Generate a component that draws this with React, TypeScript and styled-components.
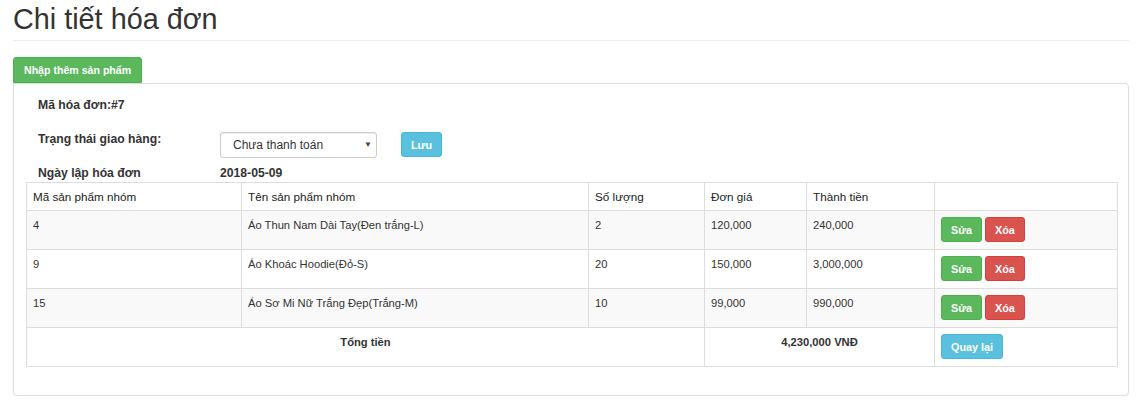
import styled, { createGlobalStyle } from 'styled-components';

interface Item {
	code: string;
	name: string;
	qty: number;
	price: string;
	total: string;
}

const items: Item[] = [
	{ code: '4', name: 'Áo Thun Nam Dài Tay(Đen trắng-L)', qty: 2, price: '120,000', total: '240,000' },
	{ code: '9', name: 'Áo Khoác Hoodie(Đỏ-S)', qty: 20, price: '150,000', total: '3,000,000' },
	{ code: '15', name: 'Áo Sơ Mi Nữ Trắng Đẹp(Trắng-M)', qty: 10, price: '99,000', total: '990,000' },
];

const colWidths = [215, 347, 116, 102, 128, 183];

export default function App() {
	return (
		<>
			<GlobalStyle />
			<Page>
				<Title>Chi tiết hóa đơn</Title>
				<Divider />
				<Button variant="success" tab>
					Nhập thêm sản phẩm
				</Button>
				<Panel>
					<InfoLine>Mã hóa đơn:#7</InfoLine>
					<StatusRow>
						<Label>Trạng thái giao hàng:</Label>
						<SelectWrap>
							<Select defaultValue="unpaid">
								<option value="unpaid">Chưa thanh toán</option>
								<option value="paid">Đã thanh toán</option>
							</Select>
							<Caret>▼</Caret>
						</SelectWrap>
						<Button variant="info">Lưu</Button>
					</StatusRow>
					<DateRow>
						<Label>Ngày lập hóa đơn</Label>
						<span>2018-05-09</span>
					</DateRow>
					<Table>
						<colgroup>
							{colWidths.map((w, i) => (
								<col key={i} style={{ width: w }} />
							))}
						</colgroup>
						<thead>
							<tr>
								<Th>Mã sản phẩm nhóm</Th>
								<Th>Tên sản phẩm nhóm</Th>
								<Th>Số lượng</Th>
								<Th>Đơn giá</Th>
								<Th>Thành tiền</Th>
								<Th />
							</tr>
						</thead>
						<tbody>
							{items.map((item, i) => (
								<Row key={item.code} striped={i % 2 === 0}>
									<Td>{item.code}</Td>
									<Td>{item.name}</Td>
									<Td>{item.qty}</Td>
									<Td>{item.price}</Td>
									<Td>{item.total}</Td>
									<Td>
										<Actions>
											<Button variant="success">Sửa</Button>
											<Button variant="danger">Xóa</Button>
										</Actions>
									</Td>
								</Row>
							))}
							<Row>
								<Td colSpan={3} center bold>
									Tổng tiền
								</Td>
								<Td colSpan={2} center bold>
									4,230,000 VNĐ
								</Td>
								<Td>
									<Button variant="info">Quay lại</Button>
								</Td>
							</Row>
						</tbody>
					</Table>
				</Panel>
			</Page>
		</>
	);
}

const GlobalStyle = createGlobalStyle`
	body {
		margin: 0;
		background: #fff;
		color: #333;
		font-family: "Liberation Sans", Arial, sans-serif;
		font-size: 11.2px;
	}
`;

const Page = styled.div`
	padding: 0 11px 0 13px;
	width: 1140px;
	box-sizing: border-box;
`;

const Title = styled.h1`
	margin: 0;
	padding-top: 2px;
	font-size: 28.8px;
	line-height: 34px;
	font-weight: 400;
	color: #333;
`;

const Divider = styled.hr`
	margin: 4px 0 16px;
	border: 0;
	border-top: 1px solid #eee;
`;

const palette = {
	success: { bg: '#5cb85c', border: '#4cae4c' },
	danger: { bg: '#d9534f', border: '#d43f3a' },
	info: { bg: '#5bc0de', border: '#46b8da' },
};

const Button = styled.button<{ variant: keyof typeof palette; tab?: boolean }>`
	display: inline-block;
	box-sizing: border-box;
	height: ${({ tab }) => (tab ? '26px' : '25px')};
	padding: ${({ tab }) => (tab ? '0 10px' : '0 9px')};
	font-family: inherit;
	font-size: ${({ tab }) => (tab ? '10.6px' : '10.8px')};
	font-weight: 700;
	color: #fff;
	background: ${({ variant }) => palette[variant].bg};
	border: 1px solid ${({ variant }) => palette[variant].border};
	border-radius: ${({ tab }) => (tab ? '3px 3px 0 0' : '3px')};
	cursor: pointer;
	vertical-align: top;
`;

const Panel = styled.div`
	border: 1px solid #ddd;
	border-radius: 0 4px 4px 4px;
	box-shadow: 0 1px 1px rgba(0, 0, 0, 0.05);
	padding: 12px 11px 28px 12px;
`;

const InfoLine = styled.div`
	padding-left: 12px;
	font-size: 12.2px;
	line-height: 18px;
	font-weight: 700;
`;

const Label = styled.div`
	width: 182px;
	flex: none;
	font-size: 12.2px;
	font-weight: 700;
	line-height: 18px;
`;

const StatusRow = styled.div`
	display: flex;
	align-items: flex-start;
	margin-top: 16px;
	padding-left: 12px;

	& > button {
		margin-left: 24px;
		margin-top: 2px;
	}
`;

const SelectWrap = styled.div`
	position: relative;
	margin-top: 2px;
	width: 157px;
`;

const Select = styled.select`
	appearance: none;
	width: 100%;
	height: 26px;
	padding: 0 20px 0 12px;
	font-family: inherit;
	font-size: 12px;
	color: #333;
	background: #fff;
	border: 1px solid #ccc;
	border-radius: 3px;
	box-shadow: inset 0 1px 1px rgba(0, 0, 0, 0.075);
`;

const Caret = styled.span`
	position: absolute;
	right: 5px;
	top: 8px;
	font-size: 8px;
	color: #444;
	pointer-events: none;
`;

const DateRow = styled.div`
	display: flex;
	margin-top: 6px;
	padding-left: 12px;
	font-size: 12.2px;
	font-weight: 700;
	line-height: 18px;
`;

const Table = styled.table`
	width: 1091px;
	table-layout: fixed;
	border-collapse: collapse;
	border: 1px solid #ddd;
`;

const Th = styled.th`
	padding: 5px 6px;
	text-align: left;
	font-weight: 400;
	font-size: 11.7px;
	line-height: 17px;
	color: #222;
	border: 1px solid #ddd;
`;

const Row = styled.tr<{ striped?: boolean }>`
	background: ${({ striped }) => (striped ? '#f9f9f9' : '#fff')};
`;

const Td = styled.td<{ center?: boolean; bold?: boolean }>`
	padding: 6px 6px 7px;
	vertical-align: top;
	font-size: 11.2px;
	line-height: 17px;
	height: 25px;
	text-align: ${({ center }) => (center ? 'center' : 'left')};
	font-weight: ${({ bold }) => (bold ? 700 : 400)};
	border: 1px solid #ddd;
`;

const Actions = styled.div`
	display: flex;
	gap: 3px;
`;
